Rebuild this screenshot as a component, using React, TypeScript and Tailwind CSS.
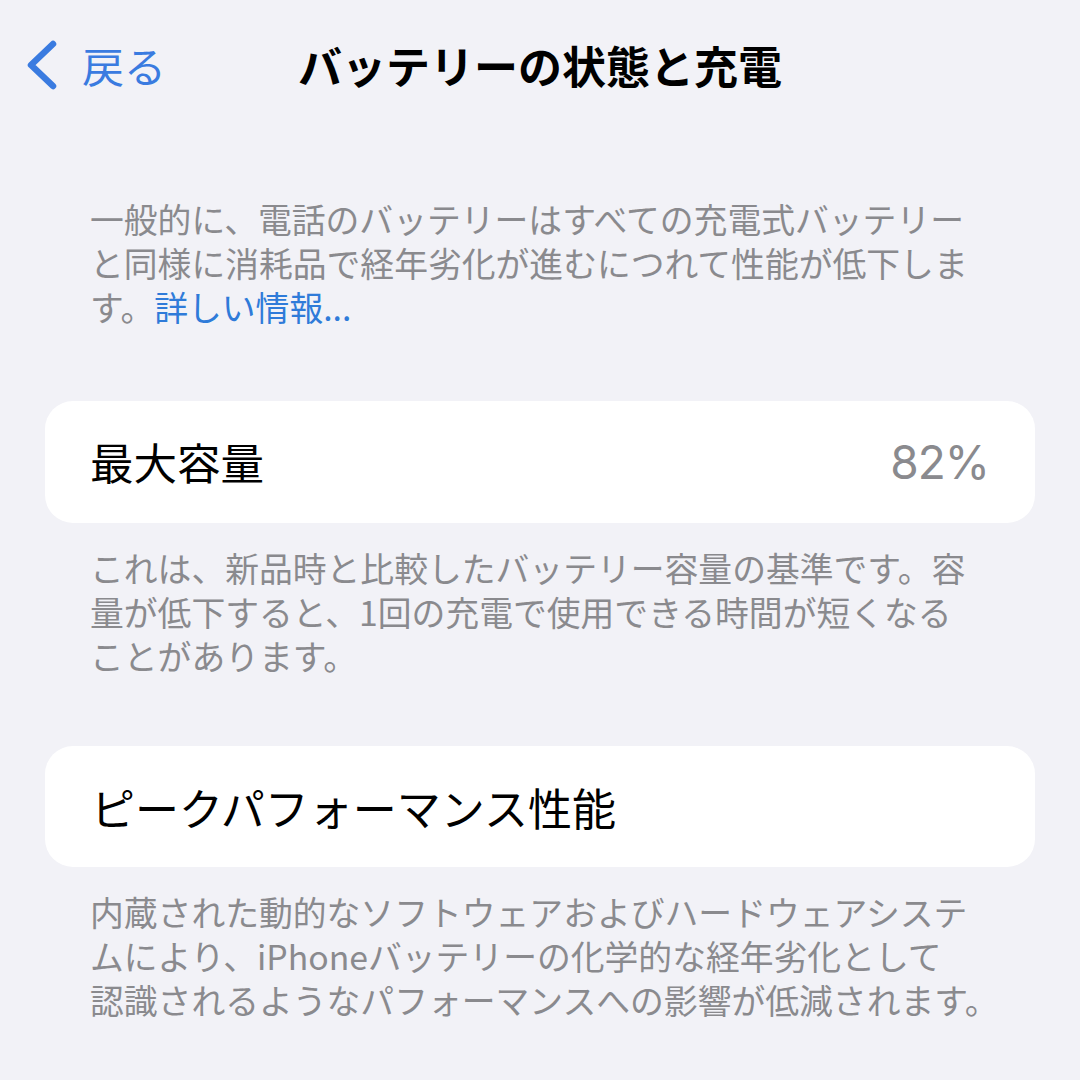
import React from "react";

const jp = { fontFamily: '"Noto Sans CJK JP", "Noto Sans", sans-serif' };

function Caption({ lines }: { lines: React.ReactNode[] }) {
  return (
    <div className="px-[90px] text-[33.8px] leading-[44px] text-[#8a8a8e] whitespace-nowrap">
      {lines.map((l, i) => (
        <div key={i}>{l}</div>
      ))}
    </div>
  );
}

export default function App() {
  return (
    <div className="w-[1080px] h-[1080px] bg-[#f2f2f7] overflow-hidden" style={jp}>
      <div className="relative h-[130px] flex items-center">
        <div className="flex items-center pl-[24px] text-[#3478f6]">
          <svg width="34" height="50" viewBox="0 0 34 50" fill="none">
            <path d="M29 4 L7 25 L29 46" stroke="#3a7be0" strokeWidth="6.5" strokeLinecap="round" strokeLinejoin="round" />
          </svg>
          <span className="ml-[24px] text-[42px] leading-none text-[#3a7be0]">戻る</span>
        </div>
        <div className="absolute left-0 right-0 top-0 h-[130px] flex items-center justify-center pointer-events-none">
          <span className="text-[44px] font-bold text-black leading-none">バッテリーの状態と充電</span>
        </div>
      </div>

      <div className="mt-[67px]">
        <Caption
          lines={[
            "一般的に、電話のバッテリーはすべての充電式バッテリー",
            "と同様に消耗品で経年劣化が進むにつれて性能が低下しま",
            <>
              す。<span className="text-[#2f7bd9]">詳しい情報...</span>
            </>,
          ]}
        />
      </div>

      <div className="mt-[72px] mx-[45px] h-[122px] bg-white rounded-[28px] flex items-center justify-between pl-[45px] pr-[46px]">
        <span className="text-[43.5px] text-black leading-none">最大容量</span>
        <span className="text-[46px] text-[#8a8a8e] leading-none tracking-[-1px]" style={{ fontFamily: 'Inter, "Noto Sans", sans-serif' }}>
          82%
        </span>
      </div>

      <div className="mt-[23px]">
        <Caption
          lines={[
            "これは、新品時と比較したバッテリー容量の基準です。容",
            "量が低下すると、1回の充電で使用できる時間が短くなる",
            "ことがあります。",
          ]}
        />
      </div>

      <div className="mt-[68px] mx-[45px] h-[121px] bg-white rounded-[28px] flex items-center px-[46px]">
        <span className="text-[44px] text-black leading-none">ピークパフォーマンス性能</span>
      </div>

      <div className="mt-[23px]">
        <Caption
          lines={[
            "内蔵された動的なソフトウェアおよびハードウェアシステ",
            "ムにより、iPhoneバッテリーの化学的な経年劣化として",
            "認識されるようなパフォーマンスへの影響が低減されます。",
          ]}
        />
      </div>
    </div>
  );
}
